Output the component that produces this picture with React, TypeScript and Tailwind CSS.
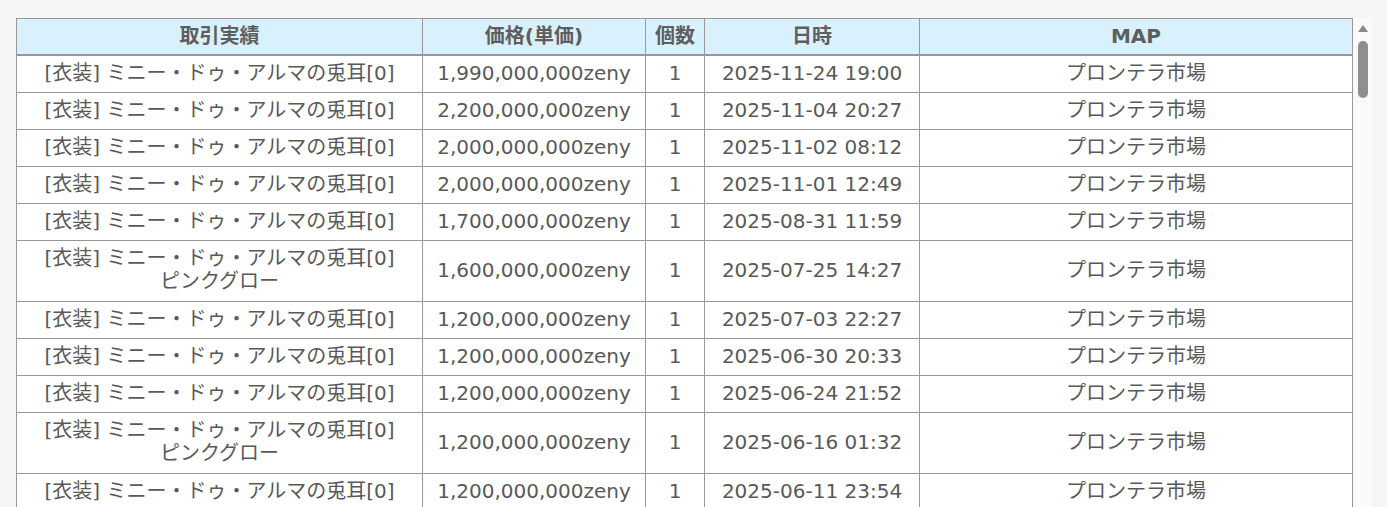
import React from "react";

type Row = { name: string; sub?: string; price: string; qty: string; date: string; map: string };

const NAME = "[衣装] ミニー・ドゥ・アルマの兎耳[0]";
const MAPN = "プロンテラ市場";

const rows: Row[] = [
  { name: NAME, price: "1,990,000,000zeny", qty: "1", date: "2025-11-24 19:00", map: MAPN },
  { name: NAME, price: "2,200,000,000zeny", qty: "1", date: "2025-11-04 20:27", map: MAPN },
  { name: NAME, price: "2,000,000,000zeny", qty: "1", date: "2025-11-02 08:12", map: MAPN },
  { name: NAME, price: "2,000,000,000zeny", qty: "1", date: "2025-11-01 12:49", map: MAPN },
  { name: NAME, price: "1,700,000,000zeny", qty: "1", date: "2025-08-31 11:59", map: MAPN },
  { name: NAME, sub: "ピンクグロー", price: "1,600,000,000zeny", qty: "1", date: "2025-07-25 14:27", map: MAPN },
  { name: NAME, price: "1,200,000,000zeny", qty: "1", date: "2025-07-03 22:27", map: MAPN },
  { name: NAME, price: "1,200,000,000zeny", qty: "1", date: "2025-06-30 20:33", map: MAPN },
  { name: NAME, price: "1,200,000,000zeny", qty: "1", date: "2025-06-24 21:52", map: MAPN },
  { name: NAME, sub: "ピンクグロー", price: "1,200,000,000zeny", qty: "1", date: "2025-06-16 01:32", map: MAPN },
  { name: NAME, price: "1,200,000,000zeny", qty: "1", date: "2025-06-11 23:54", map: MAPN },
];

const td = "border border-[#999999] text-center align-middle px-2 pt-[6px] pb-[7px] leading-[23px]";
const th = "border border-[#999999] border-b-2 text-center align-middle font-bold text-[#5e5e5e] pt-[6px] pb-[6px] leading-[23px]";

export default function App() {
  return (
    <div
      className="w-[1387px] h-[507px] overflow-hidden bg-[#f5f5f5] text-[20px] text-[#595959]"
      style={{ fontFamily: '"DejaVu Sans", "Noto Sans CJK JP", sans-serif' }}
    >
      <div className="flex pl-4 pt-[18px]">
        <table className="w-[1337px] border-collapse bg-white table-fixed">
          <colgroup>
            <col className="w-[406px]" />
            <col className="w-[223px]" />
            <col className="w-[59px]" />
            <col className="w-[215px]" />
            <col className="w-[433px]" />
          </colgroup>
          <thead>
            <tr className="bg-[#d9f0fd]">
              <th className={th}>取引実績</th>
              <th className={th}>価格(単価)</th>
              <th className={th}>個数</th>
              <th className={th}>日時</th>
              <th className={th}>MAP</th>
            </tr>
          </thead>
          <tbody>
            {rows.map((r, i) => (
              <tr key={i}>
                <td className={r.sub ? td + " pb-[8px]" : td}>
                  <div>{r.name}</div>
                  {r.sub && <div>{r.sub}</div>}
                </td>
                <td className={td}>{r.price}</td>
                <td className={td}>{r.qty}</td>
                <td className={td}>{r.date}</td>
                <td className={td}>{r.map}</td>
              </tr>
            ))}
          </tbody>
        </table>
        <div className="w-[19px] h-[489px] bg-[#fafafa] flex flex-col items-center pt-[7px]">
          <svg width="10" height="7" viewBox="0 0 10 7">
            <polygon points="5,0 10,7 0,7" fill="#8a8a8a" />
          </svg>
          <div className="mt-[9px] w-[10px] h-[57px] rounded-full bg-[#8f8f8f]" />
        </div>
      </div>
    </div>
  );
}
